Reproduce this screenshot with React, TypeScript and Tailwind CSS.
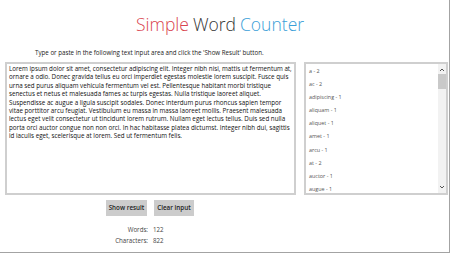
import { useState } from "react";

const sample =
  "Lorem ipsum dolor sit amet, consectetur adipiscing elit. Integer nibh nisi, mattis ut fermentum at, ornare a odio. Donec gravida tellus eu orci imperdiet egestas molestie lorem suscipit. Fusce quis urna sed purus aliquam vehicula fermentum vel est. Pellentesque habitant morbi tristique senectus et netus et malesuada fames ac turpis egestas. Nulla tristique laoreet aliquet. Suspendisse ac augue a ligula suscipit sodales. Donec interdum purus rhoncus sapien tempor vitae porttitor arcu feugiat. Vestibulum eu massa in massa laoreet mollis. Praesent malesuada lectus eget velit consectetur ut tincidunt lorem rutrum. Nullam eget lectus tellus. Duis sed nulla porta orci auctor congue non non orci. In hac habitasse platea dictumst. Integer nibh dui, sagittis id iaculis eget, scelerisque at lorem. Sed ut fermentum felis.";

const words = [
  "a - 2",
  "ac - 2",
  "adipiscing - 1",
  "aliquam - 1",
  "aliquet - 1",
  "amet - 1",
  "arcu - 1",
  "at - 2",
  "auctor - 1",
  "augue - 1",
];

export default function App() {
  const [text, setText] = useState(sample);

  return (
    <div className="h-[253px] w-[450px] overflow-hidden border-r border-b border-[#a3a3a3] bg-white font-['Open_Sans',sans-serif] text-[#222]">
      <h1 className="flex w-[440px] justify-center pt-[12px] text-[17.5px] leading-[24px] font-light">
        <span className="text-[#d9434e]">Simple</span>
        <span className="ml-[4px] text-[#333]">Word</span>
        <span className="ml-[4px] text-[#3aa0d8]">Counter</span>
      </h1>

      <p className="mt-[12px] pl-[35px] text-[6.2px] leading-[9px] text-[#222]">
        Type or paste in the following text input area and click the 'Show Result' button.
      </p>

      <div className="mt-[5px] flex gap-[8px] pl-[5px]">
        <textarea
          value={text}
          onChange={(e) => setText(e.target.value)}
          className="h-[133px] w-[291px] resize-none overflow-hidden border-2 border-[#cfcfcf] px-[2px] pt-[1px] font-['Open_Sans',sans-serif] text-[6.25px] leading-[8.4px] text-[#111] outline-none"
        />

        <div className="flex h-[133px] w-[144px] border-2 border-[#cfcfcf]">
          <ul className="flex-1 pt-[1px] pl-[3px] text-[5.4px] text-[#555]">
            {words.map((w) => (
              <li key={w} className="h-[13.1px] leading-[13.1px]">
                {w}
              </li>
            ))}
          </ul>
          <div className="flex w-[8px] flex-col items-center bg-[#f2f2f2]">
            <svg width="6" height="6" viewBox="0 0 6 6" className="mt-[3px]">
              <path d="M1 4 L3 2 L5 4" fill="none" stroke="#555" strokeWidth="1" />
            </svg>
            <div className="mt-[1px] h-[15px] w-full bg-[#c9c9c9]" />
            <div className="flex-1" />
            <svg width="6" height="6" viewBox="0 0 6 6" className="mb-[3px]">
              <path d="M1 2 L3 4 L5 2" fill="none" stroke="#555" strokeWidth="1" />
            </svg>
          </div>
        </div>
      </div>

      <div className="mt-[5px] flex gap-[7px] pl-[106px]">
        <button className="h-[16px] w-[41px] bg-[#cccccc] text-[6.3px] font-semibold text-[#222]">
          Show result
        </button>
        <button className="h-[16px] w-[40px] bg-[#cccccc] text-[6.3px] font-semibold text-[#222]">
          Clear input
        </button>
      </div>

      <div className="mt-[8px] grid w-[200px] grid-cols-[148px_1fr] gap-x-[5px] text-[6.2px] leading-[11px] text-[#444]">
        <span className="text-right">Words:</span>
        <span>{text.trim() ? 122 : 0}</span>
        <span className="text-right">Characters:</span>
        <span>{text.length ? 822 : 0}</span>
      </div>
    </div>
  );
}
